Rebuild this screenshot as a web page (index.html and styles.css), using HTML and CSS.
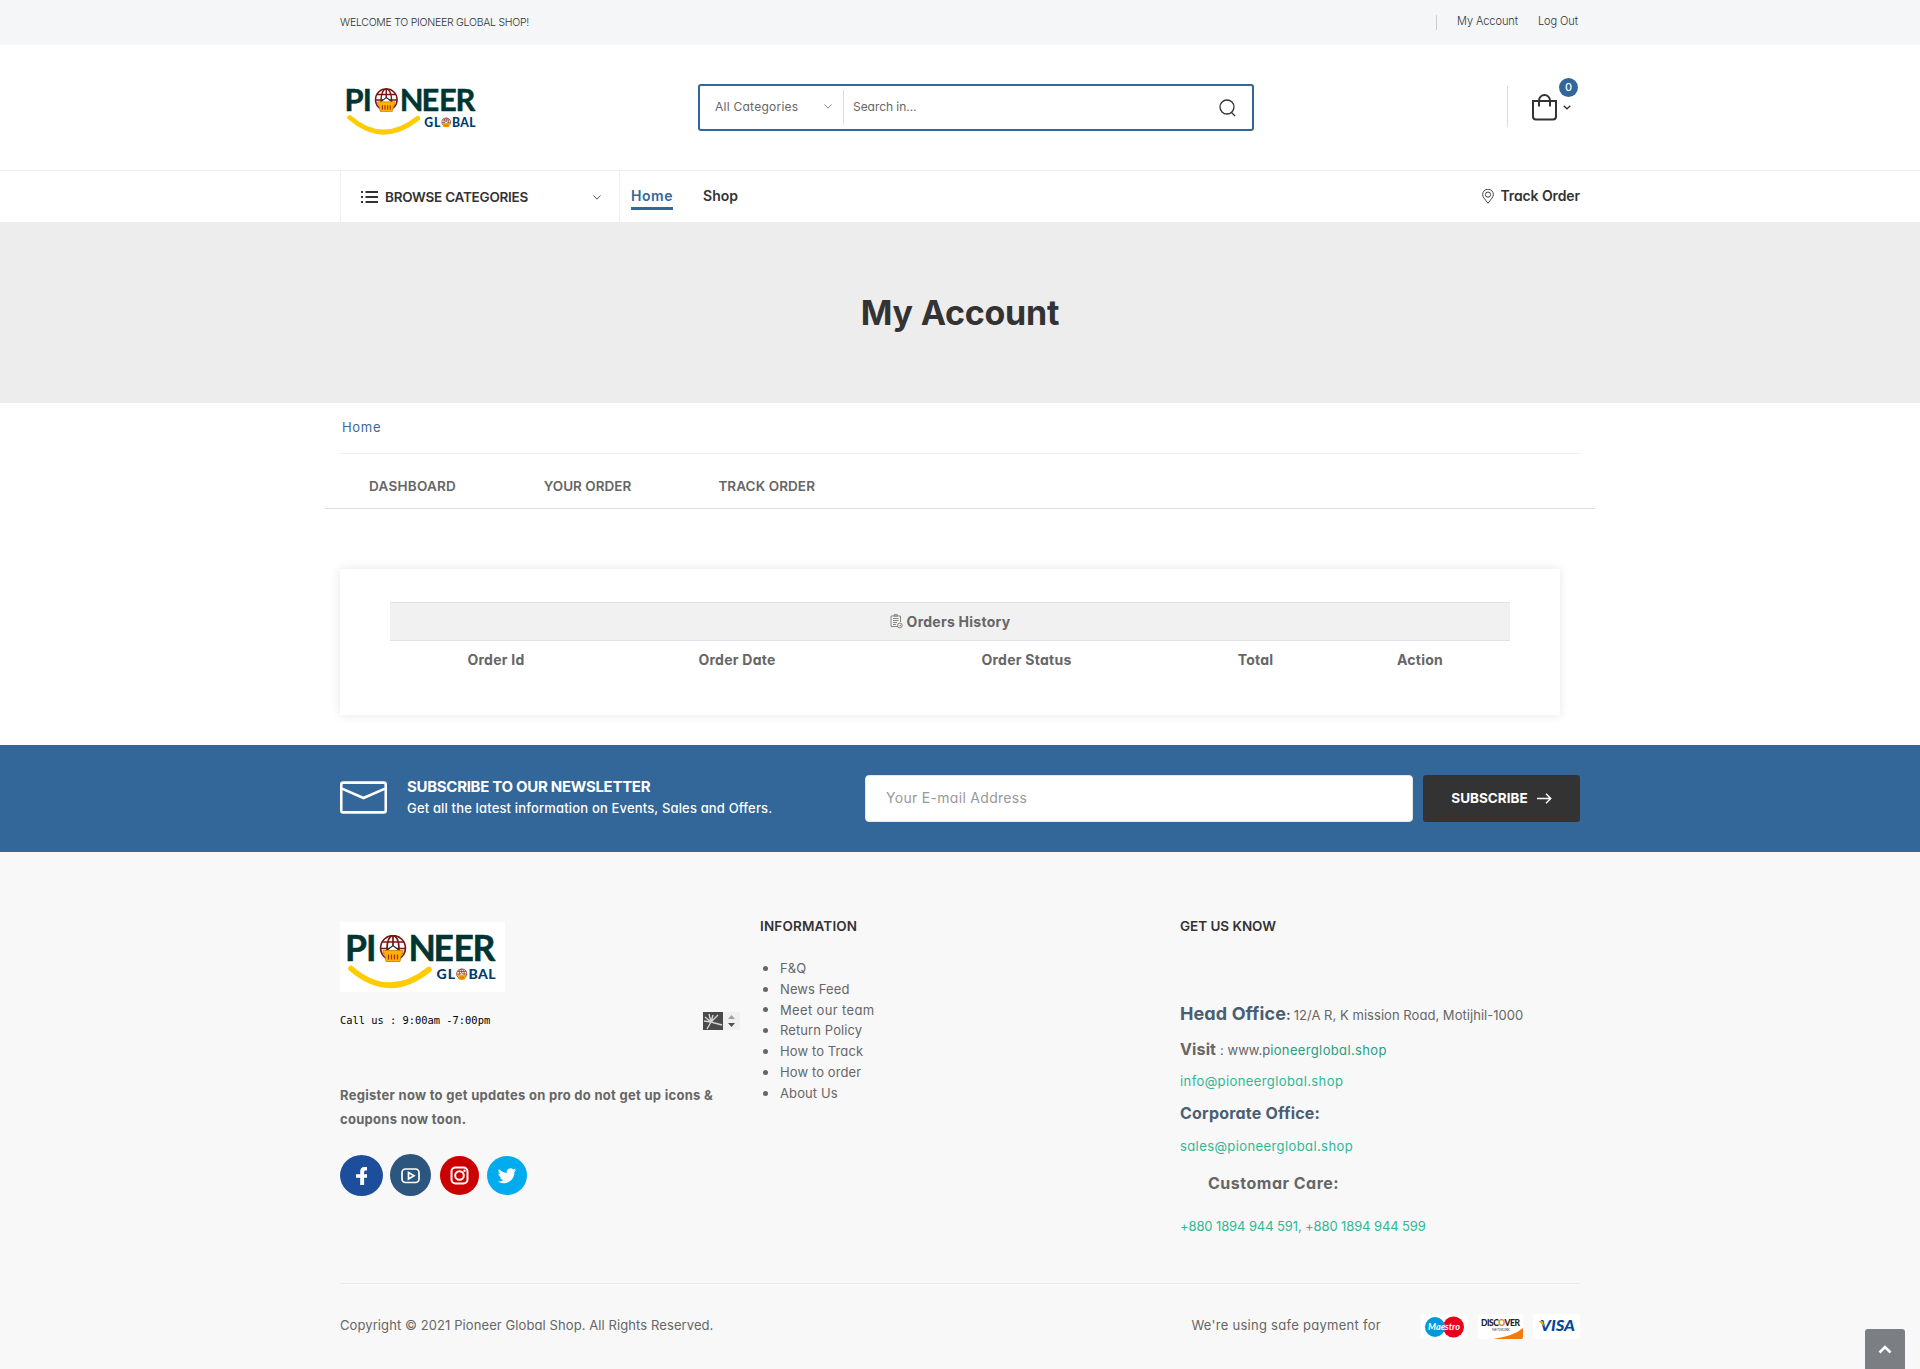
FILE: index.html
```html
<!DOCTYPE html>
<html lang="en">
<head>
<meta charset="utf-8">
<title>My Account - Pioneer Global Shop</title>
<link rel="stylesheet" href="styles.css">
</head>
<body>
<svg class="defs" width="0" height="0" aria-hidden="true">
  <symbol id="globe" viewBox="0 0 28 28">
    <g fill="none" stroke="#7a1714" stroke-width="1.7"><circle cx="14" cy="13" r="12.4"/><ellipse cx="14" cy="13" rx="6" ry="12.4"/><path d="M14 .6v14M3.4 7h21.200M1.600 13.500h25"/></g>
    <path d="M6.500 16.500l7.500-6 7.500 6" fill="#fff" stroke="#12383a" stroke-width="1.200"/>
    <path d="M4 15.500h20v3h-1.500L21 26.500H7L5.500 18.500H4z" fill="#ffb400" stroke="#c87a00" stroke-width=".8"/>
    <path d="M9.500 19.500v5M12.500 19.500v5M15.500 19.500v5M18.500 19.500v5" stroke="#b02a12" stroke-width="1.300"/>
  </symbol>
</svg>

<div class="topbar"><div class="container topbar-row">
  <span class="t-welcome">WELCOME TO PIONEER GLOBAL SHOP!</span>
  <nav class="top-links"><a>My Account</a><a>Log Out</a></nav>
</div></div>

<header class="header"><div class="container header-row">
  <svg class="logo" width="144" height="61" viewBox="0 0 165 70">
    <g id="logo">
      <rect width="165" height="70" fill="#fff"/>
      <g class="logo-main"><text x="5 26" y="39">PI</text><text x="68.500 93.500 113.500 132.500" y="39">NEER</text></g>
      <use href="#globe" x="39" y="13" width="28" height="28"/>
      <g class="logo-sub"><text x="96.500" y="57" textLength="18.500">GL</text><text x="128.500" y="57" textLength="27">BAL</text></g>
      <use href="#globe" x="116" y="46.500" width="11.500" height="11.500"/>
      <path d="M11 46.500Q49 79.500 89 47.500" fill="none" stroke="#fc0" stroke-width="5.600" stroke-linecap="round"/>
    </g>
  </svg>
  <form class="search">
    <div class="select"><span class="t-allcat">All Categories</span><svg width="8" height="5" viewBox="0 0 8 5"><path d="M.5.500L4 4.200 7.500.500" fill="none" stroke="#777" stroke-width=".9"/></svg></div>
    <span class="search-field"><span class="t-search">Search in...</span></span>
    <svg class="search-icon" width="18" height="18" viewBox="0 0 18 18"><g fill="none" stroke="#333" stroke-width="1.300"><circle cx="8" cy="8" r="7"/><path d="M12 13l4 4"/></g></svg>
  </form>
  <div class="cart">
    <svg width="25" height="27" viewBox="0 0 25 27"><g fill="none" stroke="#333" stroke-width="2"><path d="M1 7h23v15.500a3 3 0 0 1-3 3H4a3 3 0 0 1-3-3z"/><path d="M7 12.500V6.500a5.500 5.500 0 0 1 11 0v6"/></g></svg>
    <svg class="cart-arrow" width="8" height="5" viewBox="0 0 8 5"><path d="M.7.700L4 3.800 7.300.700" fill="none" stroke="#333" stroke-width="1.300"/></svg>
    <span class="badge">0</span>
  </div>
</div></header>

<div class="mainnav"><div class="container mainnav-row">
  <div class="browse">
    <svg width="17" height="12" viewBox="0 0 17 12"><path d="M4.500 1H17M4.500 6H17M4.500 11H17M0 1h2M0 6h2M0 11h2" stroke="#333" stroke-width="1.800"/></svg>
    <span class="t-browse">BROWSE CATEGORIES</span>
    <svg class="browse-arrow" width="8" height="5" viewBox="0 0 8 5"><path d="M.5.500L4 4.200 7.500.500" fill="none" stroke="#555" stroke-width="1"/></svg>
  </div>
  <a class="nav-link active">Home</a>
  <a class="nav-link">Shop</a>
  <a class="track"><svg width="12" height="15" viewBox="0 0 12 15"><g fill="none" stroke="#444" stroke-width="1"><path d="M6 14.200C3.500 10.800.6 8.300.6 5.600a5.400 5.400 0 0 1 10.800 0C11.400 8.300 8.500 10.800 6 14.200z"/><circle cx="6" cy="5.600" r="2.600"/></g></svg><span class="t-track">Track Order</span></a>
</div></div>

<section class="banner"><h1 class="t-title">My Account</h1></section>

<main class="container">
  <div class="crumbs"><a class="t-crumb">Home</a></div>
  <nav class="tabs"><a class="t-dash">DASHBOARD</a><a class="t-your">YOUR ORDER</a><a class="t-trk">TRACK ORDER</a></nav>
  <section class="card">
    <div class="history">
      <svg width="13" height="15" viewBox="0 0 13 15"><g fill="none" stroke="#8a8680" stroke-width="1"><path d="M8 12.500H1V2h9.500v6"/><path d="M4 2V.700h3.500V2zM3 4.500h5.500M3 6.500h5.500M3 8.500h4M3 10.500h3"/><circle cx="9.800" cy="11.500" r="2.400"/><path d="M9 11.500l.8.800 1.200-1.500"/></g></svg>
      <span>Orders History</span>
    </div>
    <div class="columns"><span>Order Id</span><span>Order Date</span><span>Order Status</span><span>Total</span><span>Action</span></div>
  </section>
</main>

<section class="newsletter"><div class="container newsletter-row">
  <svg class="envelope" width="47" height="33" viewBox="0 0 48 33"><g fill="none" stroke="#fff" stroke-width="2.600"><rect x="1.300" y="1.300" width="45.400" height="30.400" rx="2"/><path d="M2 7.500l22 9.500 22-9.500"/></g></svg>
  <div class="news-copy"><span class="t-sub">SUBSCRIBE TO OUR NEWSLETTER</span><span class="t-get">Get all the latest information on Events, Sales and Offers.</span></div>
  <div class="email"><span class="t-email">Your E-mail Address</span></div>
  <button class="subscribe"><span>SUBSCRIBE</span><svg width="15" height="11" viewBox="0 0 15 11"><path d="M0 5.500h13.500M9 .8l4.700 4.700L9 10.200" fill="none" stroke="#fff" stroke-width="1.500"/></svg></button>
</div></section>

<footer class="footer"><div class="container">
  <div class="footer-grid">
    <div class="about">
      <svg width="165" height="70"><use href="#logo"/></svg>
      <div class="call">
        <span>Call us : 9:00am -7:00pm</span>
        <svg width="37" height="18" viewBox="0 0 37 18"><path fill="#4a4a4a" d="M0 0h20v18H0z"/><path fill="#f0f0f0" d="M20 0h17v18H20z"/><path d="M4 17L8 10 19 13M8 10L1 9M8 10L6 2M8 10L10 3M8 10L15 3M8 10L2 5" stroke="#d5d5d5" stroke-width="1.400" fill="none"/><path fill="#a0a0a0" d="M25 7l3.500-4L32 7z"/><path fill="#505050" d="M25 11l3.500 4 3.500-4z"/></svg>
      </div>
      <p class="register">Register now to get updates on pro do not get up icons &amp;<br>coupons now toon.</p>
      <div class="social">
        <svg width="43" height="41" viewBox="0 0 43 41"><ellipse cx="21.500" cy="20.500" rx="21.500" ry="20.500" fill="#1c4e9c"/><path d="M27 12h-2.500c-3 0-4.300 1.800-4.300 4.500v2.800H16v3.500h4.200V30h3.900v-7.200H27v-3.500h-2.900v-2.200c0-1.200.6-1.700 1.700-1.700H27z" fill="#fff"/></svg>
        <svg class="youtube" width="41" height="42" viewBox="0 0 41 42"><ellipse cx="20.500" cy="21" rx="20.500" ry="21" fill="#2c567e"/><g fill="none" stroke="#fff" stroke-width="1.700"><rect x="12" y="15" width="17" height="13.500" rx="3.500"/><path d="M18.500 18.500v6.500l5.500-3.200z"/></g></svg>
        <svg width="39" height="39" viewBox="0 0 39 39"><circle cx="19.500" cy="19.500" r="19.500" fill="#c00"/><g fill="none" stroke="#fff" stroke-width="2"><rect x="11.500" y="11.500" width="16" height="16" rx="4"/><circle cx="19.500" cy="19.500" r="4.300"/></g><circle cx="24.500" cy="14.700" r="1.200" fill="#fff"/></svg>
        <svg width="40" height="39" viewBox="0 0 40 39"><ellipse cx="20" cy="19.500" rx="20" ry="19.500" fill="#00acee"/><path transform="translate(10.800 10.500) scale(.77)" d="M23.950 4.570a10 10 0 0 1-2.820.77 4.960 4.960 0 0 0 2.160-2.720c-.95.550-2 .95-3.130 1.180a4.920 4.920 0 0 0-8.380 4.480C7.690 8.100 4.070 6.130 1.640 3.160a4.920 4.920 0 0 0 1.520 6.570 4.900 4.900 0 0 1-2.230-.61v.06a4.920 4.920 0 0 0 3.950 4.830 5 5 0 0 1-2.210.08 4.940 4.940 0 0 0 4.600 3.420A9.870 9.870 0 0 1 0 19.540a14 14 0 0 0 7.550 2.210c9.050 0 14-7.500 14-13.980 0-.21 0-.42-.02-.63a9.940 9.940 0 0 0 2.460-2.550z" fill="#fff"/></svg>
      </div>
    </div>
    <div>
      <h4 class="t-info">INFORMATION</h4>
      <ul class="links">
        <li>F&amp;Q</li><li>News Feed</li><li class="wide">Meet our team</li><li>Return Policy</li><li>How to Track</li><li>How to order</li><li>About Us</li>
      </ul>
    </div>
    <div class="contact">
      <h4>GET US KNOW</h4>
      <p class="head"><b class="t-head">Head Office</b><b class="colon">:</b><span class="t-addr small">12/A R, K mission Road, Motijhil-1000</span></p>
      <p class="visit"><b class="t-visit">Visit</b><span class="small">: www.p</span><span class="t-shopurl small teal">ioneerglobal.shop</span></p>
      <p class="info"><a>info@pioneerglobal.shop</a></p>
      <p class="corp"><b>Corporate Office:</b></p>
      <p class="sales"><a>sales@pioneerglobal.shop</a></p>
      <p class="care"><b>Customar Care:</b></p>
      <p class="phone"><a>+880 1894 944 591, +880 1894 944 599</a></p>
    </div>
  </div>
  <div class="footer-bottom">
    <span class="t-copy">Copyright © 2021 Pioneer Global Shop. All Rights Reserved.</span>
    <div class="payment"><span class="t-pay">We're using safe payment for</span>
      <svg width="47" height="25" viewBox="0 0 47 25"><rect width="47" height="25" rx="2" fill="#fff"/><circle cx="14" cy="13" r="10" fill="#0099df"/><circle cx="32.500" cy="13" r="10.500" fill="#eb001b"/><path d="M23 8q4 5 0 10-4-5 0-10" fill="#6c6bbd"/><text class="pay-text" x="7" y="16" textLength="32" lengthAdjust="spacingAndGlyphs" fill="#fff">Maestro</text></svg>
      <svg width="45" height="25" viewBox="0 0 45 25"><rect width="45" height="25" rx="2" fill="#fff"/><path d="M15 25Q36 22 45 14v9q0 2-2 2z" fill="#f47b0b"/><text class="pay-text disc" x="3" y="12" textLength="39" fill="#222">DISC<tspan fill="#f47b0b">O</tspan>VER</text><text class="pay-net" x="14" y="16.500" textLength="18" fill="#555">NETWORK</text></svg>
      <svg width="47" height="25" viewBox="0 0 47 25"><rect width="47" height="25" rx="2" fill="#fff"/><text class="pay-visa" x="7" y="17" textLength="35" lengthAdjust="spacingAndGlyphs" fill="#00479b">VISA</text><path d="M5 7h4.500l2 5.500Q8.500 9 5 7z" fill="#f7a600"/></svg>
    </div>
  </div>
</div></footer>
<a class="to-top"><svg width="14" height="9" viewBox="0 0 14 9"><path d="M1.500 7.500L7 2l5.500 5.500" fill="none" stroke="#fff" stroke-width="2.600"/></svg></a>
</body>
</html>
```
FILE: styles.css
```css
* { box-sizing: border-box; }
body { margin: 0; font: 400 13px/24px Inter, "Open Sans", sans-serif; font-feature-settings: "cv11"; color: #666; background: #fff; white-space: nowrap; }
.defs { position: absolute; }
svg { display: block; flex: none; }
p, h1, h4 { margin: 0; }
b { font-weight: 700; }
.container { width: 1240px; margin: 0 auto; }

.topbar { height: 45px; background: #f4f6f8; color: #333; font-size: 11px; font-weight: 300; }
.topbar-row { height: 44px; display: flex; align-items: center; justify-content: space-between; }
.t-welcome { padding-top: 1px; font-size: 10.5px; letter-spacing: -.26px; }
.top-links { display: flex; gap: 20px; height: 15px; line-height: 13px; border-left: 1px solid #ccc; padding: 0 2px 0 20px; letter-spacing: -.07px; }

.header { height: 125px; }
.header-row { height: 125px; display: flex; align-items: flex-start; }
.logo { margin-top: 32px; }
.search { display: flex; align-items: center; width: 556px; height: 47px; margin: 39px 0 0 214px; border: 2px solid #369; border-radius: 3px; font-size: 12px; color: #666; }
.select { display: flex; align-items: center; justify-content: space-between; width: 144px; height: 35px; padding: 0 11px 2px 15px; border-right: 1px solid #ddd; }
.t-allcat { letter-spacing: .25px; }
.t-search { letter-spacing: -.05px; }
.search-field { flex: 1; padding: 0 0 2px 9px; }
.search-icon { margin-right: 15px; }
.cart { position: relative; display: flex; height: 41px; margin: 41px 0 0 253px; padding: 8px 0 0 24px; border-left: 1px solid #ddd; }
.cart-arrow { margin: 11px 0 0 6px; }
.badge { position: absolute; left: 51px; top: -8px; width: 19px; height: 19px; border-radius: 50%; background: #369; color: #fff; font-size: 11px; line-height: 19px; text-align: center; font-weight: 500; }

.mainnav { height: 52px; border-top: 1px solid #eee; color: #333; font-size: 14px; font-weight: 600; }
.mainnav-row { display: flex; align-items: center; height: 51px; }
.browse { display: flex; align-items: center; width: 280px; height: 51px; padding: 1px 18px 0 20px; border: solid #eee; border-width: 0 1px; }
.t-browse { margin-left: 7px; font-size: 13.5px; letter-spacing: -.25px; }
.browse-arrow { margin-left: auto; }
.nav-link { height: 26px; margin: 0 18px 0 12px; }
.active { margin-left: 11px; color: #369; border-bottom: 3px solid #369; letter-spacing: .55px; }
.track { display: flex; align-items: center; gap: 6px; margin-left: auto; padding-bottom: 1px; }
.t-track { letter-spacing: -.1px; }

.banner { height: 181px; background: #ededed; display: flex; align-items: center; justify-content: center; }
.t-title { font-size: 34px; line-height: 40px; font-weight: 700; letter-spacing: -.25px; color: #333; }

.crumbs { height: 51px; padding: 12px 2px 0; border-bottom: 1px solid #eee; color: #3d6794; letter-spacing: .7px; }
.tabs { display: flex; height: 55px; margin: 0 -15px; padding: 20px 44px 0; border-bottom: 1px solid #ddd; font-size: 13.5px; font-weight: 600; }
.tabs a { width: 174.7px; }
.t-dash { letter-spacing: .25px; }
.t-your { letter-spacing: 0; }
.t-trk { letter-spacing: .08px; }
.card { width: 1220px; height: 146px; margin: 60px 0 30px; padding: 33px 50px; box-shadow: 0 0 10px rgba(0,0,0,.1); font-size: 14px; font-weight: 700; letter-spacing: .26px; }
.history { display: flex; align-items: center; justify-content: center; gap: 4px; height: 39px; background: #f1f1f1; border: solid #dee2e6; border-width: 1px 0; }
.columns { display: grid; grid-template-columns: 212px 270px 309px 149px 180px; padding-top: 7px; text-align: center; }

.newsletter { height: 107px; background: #369; color: #fff; }
.newsletter-row { display: flex; align-items: center; height: 107px; padding-bottom: 1px; }
.envelope { margin-bottom: 2px; }
.news-copy { width: 458px; margin-left: 20px; padding-bottom: 1px; line-height: 21.5px; display: grid; }
.t-sub { font-size: 15px; font-weight: 700; letter-spacing: -.3px; }
.t-get { font-weight: 500; letter-spacing: .16px; }
.email { width: 548px; height: 47px; padding: 0 20px; background: #fff; border: 1px solid #e7e7e7; border-radius: 4px; line-height: 44px; color: #999; font-size: 14px; letter-spacing: .3px; }
.subscribe { display: flex; align-items: center; justify-content: center; gap: 9px; width: 157px; height: 47px; margin-left: 10px; border: 0; border-radius: 3px; background: #333; color: #fff; font: inherit; font-size: 13.5px; font-weight: 700; }

.footer { height: 517px; background: #f8f8f8; }
.footer-grid { display: grid; grid-template-columns: repeat(3, 400px); gap: 20px; height: 431px; padding-top: 62px; }
.about { padding-top: 8px; }
.call { display: flex; justify-content: space-between; margin-top: 20px; color: #000; font: 10.4px/16px "DejaVu Sans Mono", monospace; }
.register { margin-top: 53px; font-weight: 700; letter-spacing: .29px; }
.social { display: flex; align-items: center; gap: 8px; height: 42px; margin-top: 23px; }
.youtube { margin-left: -1px; margin-right: 1px; }
h4 { font-size: 13.5px; font-weight: 600; letter-spacing: -.04px; color: #333; }
.t-info { letter-spacing: .16px; }
.links { margin: 20px 0 0; padding: 0; list-style: none; line-height: 20.8px; letter-spacing: .1px; }
.links li { display: flex; align-items: center; }
.links li::before { content: ""; width: 5px; height: 5px; margin: 0 12px 0 3px; border-radius: 50%; background: #666; }
.links .wide { letter-spacing: .35px; }
.contact a { color: #2fb795; letter-spacing: .4px; }
.contact p { height: 24px; line-height: 24px; }
.contact .small { font-size: 13px; line-height: 1; }
.contact .teal { color: #2a9d80; }
.contact .head { margin-top: 64px; font-size: 18px; }
.t-head, .colon, .corp b { color: #4a5f72; }
.t-head { letter-spacing: .1px; }
.colon { font-size: 14px; line-height: 1; }
.t-addr { margin-left: 3px; letter-spacing: .04px; }
.contact .visit { margin-top: 11px; font-size: 16px; }
.t-visit { margin-right: 4px; letter-spacing: .13px; }
.t-shopurl { letter-spacing: .36px; }
.info { margin-top: 8px; }
.contact .corp { margin-top: 8px; font-size: 16px; letter-spacing: .21px; }
.sales { margin-top: 9px; }
.contact .care { margin-top: 13px; padding-left: 28px; font-size: 16px; letter-spacing: .5px; }
.phone { margin-top: 19px; }
.contact .phone a { letter-spacing: -.11px; }
.footer-bottom { display: flex; align-items: center; justify-content: space-between; height: 86px; border-top: 1px solid #ebebeb; }
.payment { display: flex; align-items: center; gap: 10px; }
.t-copy { padding-bottom: 3px; letter-spacing: .09px; }
.t-pay { margin-right: 30px; padding-bottom: 3px; letter-spacing: .28px; }
.to-top { position: fixed; right: 15px; bottom: 0; width: 40px; height: 40px; padding: 16px 13px; background: #7b7f83; border-radius: 3px 3px 0 0; }

.logo-main { font: 700 35.5px Lato, sans-serif; fill: #003532; stroke: #003532; stroke-width: .5px; }
.logo-sub { font: 900 14px Lato, sans-serif; fill: #003a70; }
.pay-text { font: italic 700 8.5px Lato, sans-serif; }
.disc { font-style: normal; font-weight: 900; }
.pay-net { font: 4px Lato, sans-serif; }
.pay-visa { font: italic 900 15px Lato, sans-serif; }
```
